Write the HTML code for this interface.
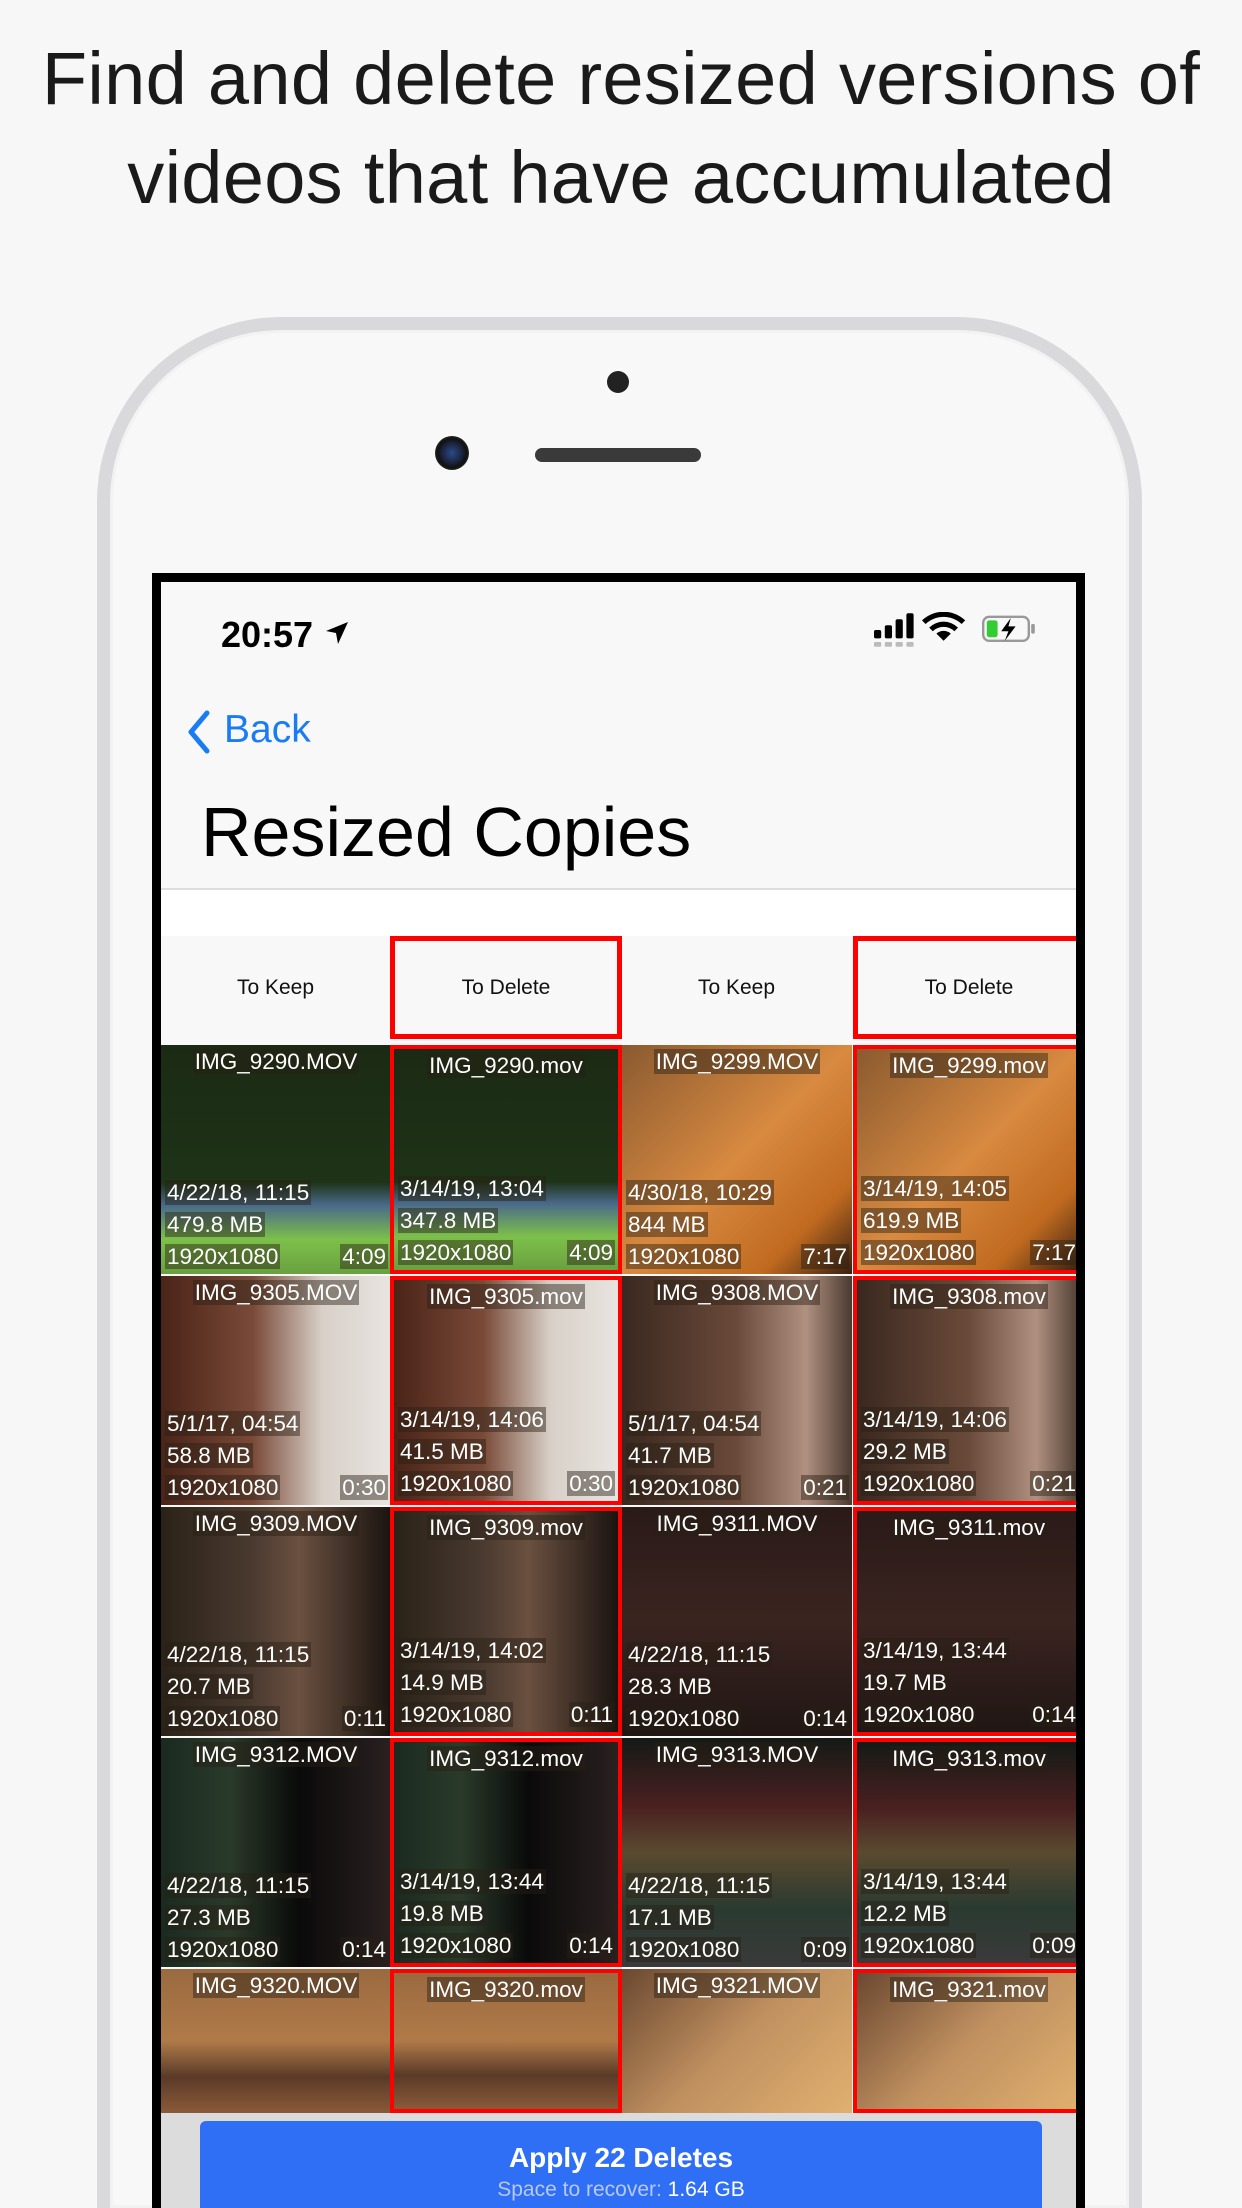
<!DOCTYPE html>
<html><head><meta charset="utf-8"><style>
*{margin:0;padding:0;box-sizing:border-box}
html,body{width:1242px;height:2208px;overflow:hidden}
body{background:#f7f7f7;font-family:"Liberation Sans",sans-serif;position:relative}
#wrap{position:absolute;left:0;top:0;width:1242px;height:2208px;overflow:hidden}
.hl{position:absolute;left:0;width:1242px;text-align:center;font-size:74px;color:#1a1a1a;font-weight:300;letter-spacing:0.3px}
.phone{position:absolute;left:97px;top:317px;width:1045px;height:1891px;border-radius:185px 185px 0 0;background:#f8f8f8;border:13px solid #d9d9db;border-bottom:none;box-shadow:inset 0 0 0 3px #f2f2f2}
.screen{position:absolute;left:152px;top:573px;width:933px;height:1635px;border:9px solid #000;border-bottom:none;background:#f8f8f8;overflow:hidden}
.abs{position:absolute}
.tile{position:absolute;width:229px;height:229px;overflow:hidden;color:#fff;font-size:22.5px}
.tile.red{border:4px solid #f00}
.tile span{background:rgba(40,30,20,.45);padding:0 2px}
.fn{position:absolute;top:4px;left:0;right:0;text-align:center}
.l1,.l2,.l3{position:absolute;left:4px}
.l1{bottom:68px}.l2{bottom:36px}.l3{bottom:4px}
.dur{position:absolute;right:3px;bottom:4px}
.hdr{position:absolute;top:354px;height:103px;width:229px;text-align:center;line-height:103px;font-size:21px;color:#111}
.hdr.red{border:5px solid #f00;line-height:93px}
</style></head><body><div id="wrap">
<div class="hl" style="top:36px">Find and delete resized versions of</div>
<div class="hl" style="top:135px">videos that have accumulated</div>
<div class="phone"></div>
<div class="abs" style="left:607px;top:371px;width:22px;height:22px;border-radius:50%;background:#222"></div>
<div class="abs" style="left:435px;top:436px;width:34px;height:34px;border-radius:50%;background:radial-gradient(circle,#2a4a8a 0,#1b2640 40%,#111 60%,#555 100%)"></div>
<div class="abs" style="left:535px;top:448px;width:166px;height:14px;border-radius:7px;background:#3a3a3a"></div>
<div class="screen">
 <div class="abs" style="left:60px;top:32px;font-size:36px;font-weight:bold;color:#000">20:57</div>
 <svg class="abs" style="left:163px;top:38px" width="26" height="26" viewBox="0 0 26 26"><path d="M24 2 L2 11 L12 13 L14 24 Z" fill="#000"/></svg>
 <svg class="abs" style="left:712px;top:30px" width="170" height="36" viewBox="0 0 140 30">
  <g fill="#bbb"><rect x="0" y="25" width="6" height="4" rx="1"/><rect x="9" y="25" width="6" height="4" rx="1"/><rect x="18" y="25" width="6" height="4" rx="1"/><rect x="27" y="25" width="6" height="4" rx="1"/></g>
  <rect x="0" y="15" width="6" height="7" rx="1.5"/><rect x="9" y="11" width="6" height="11" rx="1.5"/><rect x="18" y="6" width="6" height="16" rx="1.5"/><rect x="27" y="1" width="6" height="21" rx="1.5"/>
  <path d="M58 24 L52 18 A9 9 0 0 1 64 18 Z M46 13 A17 17 0 0 1 70 13 L67 16 A13 13 0 0 0 49 16 Z M40 7 A26 26 0 0 1 76 7 L73 10 A22 22 0 0 0 43 10 Z"/>
  <rect x="91" y="4" width="38" height="20" rx="5" fill="none" stroke="#999" stroke-width="2"/><rect x="94" y="7" width="9" height="14" rx="2" fill="#3c3"/><rect x="131" y="10" width="3" height="8" rx="1" fill="#999"/>
  <path d="M114 5 L106 16 L112 16 L109 24 L118 12 L112 12 Z"/>
 </svg>
 <svg class="abs" style="left:25px;top:128px" width="26" height="44" viewBox="0 0 26 44"><path d="M21 3 L5 22 L21 41" fill="none" stroke="#1a7cf5" stroke-width="5" stroke-linecap="round" stroke-linejoin="round"/></svg>
 <div class="abs" style="left:63px;top:126px;font-size:39px;color:#1a7cf5">Back</div>
 <div class="abs" style="left:40px;top:210px;font-size:70px;color:#000">Resized Copies</div>
 <div class="abs" style="left:0;top:306px;width:920px;height:2px;background:#ddd"></div>
 <div class="abs" style="left:0;top:308px;width:920px;height:46px;background:#fff"></div>
 <div class="hdr" style="left:0">To Keep</div>
 <div class="hdr red" style="left:229px;width:232px">To Delete</div>
 <div class="hdr" style="left:461px">To Keep</div>
 <div class="hdr red" style="left:692px;width:232px">To Delete</div>
 <div id="g"></div>
 <div class="abs" style="left:0;top:1531px;width:920px;height:104px;background:#dcdcdc"></div>
 <div class="abs" style="left:39px;top:1539px;width:842px;height:96px;background:#2f6ff5;border-radius:6px 6px 0 0;text-align:center;color:#fff">
  <div style="font-size:28px;font-weight:bold;margin-top:21px">Apply 22 Deletes</div>
  <div style="font-size:21px;color:#b8c8ee;margin-top:4px">Space to recover: <span style="color:#fff">1.64 GB</span></div>
 </div>
</div>
</div>
<script>
var rows=[
["IMG_9290",["4/22/18, 11:15","479.8 MB","4:09"],["3/14/19, 13:04","347.8 MB","4:09"],"linear-gradient(#1b2a14 0,#1e3318 60%,#4a6a8a 70%,#7dc04a 85%,#6aa040)"],
["IMG_9299",["4/30/18, 10:29","844 MB","7:17"],["3/14/19, 14:05","619.9 MB","7:17"],"linear-gradient(135deg,#8a5a30,#d88a40 50%,#c06a20 80%,#3a2010)"],
["IMG_9305",["5/1/17, 04:54","58.8 MB","0:30"],["3/14/19, 14:06","41.5 MB","0:30"],"linear-gradient(90deg,#4a2418,#7a4a38 40%,#d8d0c8 70%,#e8e4e0)"],
["IMG_9308",["5/1/17, 04:54","41.7 MB","0:21"],["3/14/19, 14:06","29.2 MB","0:21"],"linear-gradient(90deg,#3a2820,#6a4a3a 50%,#b09080 80%,#4a3a30)"],
["IMG_9309",["4/22/18, 11:15","20.7 MB","0:11"],["3/14/19, 14:02","14.9 MB","0:11"],"linear-gradient(90deg,#2a2218,#4a3a30 40%,#6a5040 60%,#1a1410)"],
["IMG_9311",["4/22/18, 11:15","28.3 MB","0:14"],["3/14/19, 13:44","19.7 MB","0:14"],"linear-gradient(#2a1a18,#3a2420 50%,#201614)"],
["IMG_9312",["4/22/18, 11:15","27.3 MB","0:14"],["3/14/19, 13:44","19.8 MB","0:14"],"linear-gradient(90deg,#1a2a20,#2a3a2a 30%,#0a0a0a 60%,#2a2020)"],
["IMG_9313",["4/22/18, 11:15","17.1 MB","0:09"],["3/14/19, 13:44","12.2 MB","0:09"],"linear-gradient(#141a16,#4a2020 30%,#5a4a30 50%,#2a3a30 75%,#3a3a3a)"],
["IMG_9320",["5/1/17, 04:54","",""],["3/14/19, 14:02","",""],"linear-gradient(#9a6a40,#b07a48 50%,#5a3a28 75%,#8a5a38)"],
["IMG_9321",["4/22/18, 11:15","",""],["3/14/19, 14:02","",""],"linear-gradient(135deg,#6a4830,#c09060 50%,#e0b070)"]];
var h="",xs=[0,229,461,692];
for(var r=0;r<5;r++){for(var p=0;p<2;p++){var d=rows[r*2+p];for(var k=0;k<2;k++){var c=p*2+k,y=463+r*231,i=k?d[2]:d[1],nm=d[0]+(k?".mov":".MOV"),hh=(r==4?1531-y:229);
h+='<div class="tile'+(k?' red':'')+'" style="left:'+xs[c]+'px;top:'+y+'px;height:'+hh+'px;width:'+(k?232:230)+'px;background:'+d[3]+'"><div class="fn"><span>'+nm+'</span></div>'+(i[1]?'<div class="l1"><span>'+i[0]+'</span></div><div class="l2"><span>'+i[1]+'</span></div><div class="l3"><span>1920x1080</span></div><div class="dur"><span>'+i[2]+'</span></div>':'')+'</div>';}}}
document.getElementById("g").innerHTML=h;
</script>
</body></html>
